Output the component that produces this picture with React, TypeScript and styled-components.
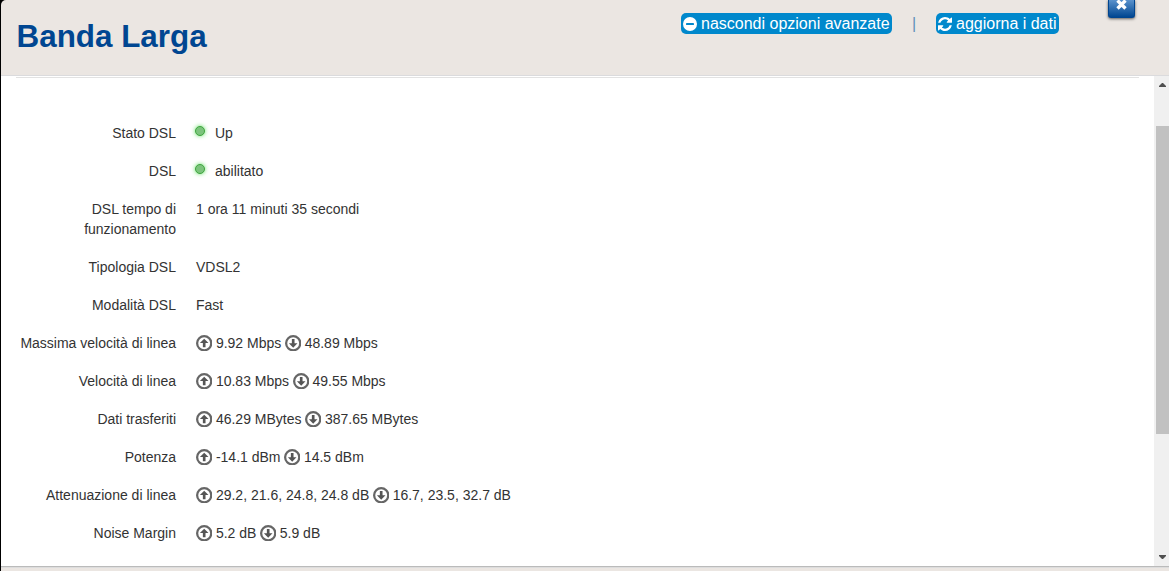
import type { ReactNode } from "react";
import styled, { createGlobalStyle } from "styled-components";

const GlobalStyle = createGlobalStyle`
    * {
        box-sizing: border-box;
    }
    body {
        margin: 0;
        background-color: #000;
        font-family: "Liberation Sans", Arial, sans-serif;
        font-size: 14px;
        line-height: 20px;
        color: #333;
        overflow: hidden;
    }
`;

const Modal = styled.div`
    height: 571px;
    margin-left: 1px;
    display: flex;
    flex-direction: column;
    background-color: #ebe6e2;
    border-top-left-radius: 5px;
`;

const Header = styled.header`
    height: 76px;
    flex: none;
    display: flex;
    justify-content: space-between;
    align-items: flex-start;
    padding: 0 34px 0 15.5px;
    border-bottom: 1px solid #dbdbdd;
`;

const Title = styled.h2`
    margin: 17px 0 0;
    font-size: 31.4px;
    line-height: 40px;
    font-weight: 700;
    color: #004691;
`;

const Actions = styled.div`
    display: flex;
    align-items: flex-start;
`;

const ActionButton = styled.button<{ $width: number }>`
    width: ${props => props.$width}px;
    height: 21px;
    margin-top: 13px;
    padding: 0 0 0 2px;
    display: flex;
    align-items: center;
    gap: 4px;
    border: none;
    border-radius: 5px;
    background-color: #0088cc;
    color: white;
    font-family: inherit;
    font-size: 16px;
    line-height: 21px;
    white-space: nowrap;
    cursor: pointer;
    svg {
        flex: none;
    }
`;

const Separator = styled.span`
    width: 44px;
    margin-top: 14px;
    text-align: center;
    font-size: 16px;
    color: #5f90b8;
`;

const CloseButton = styled.button`
    width: 27px;
    height: 18px;
    margin-left: 49px;
    padding: 0;
    display: flex;
    justify-content: center;
    border: 1px solid #00458f;
    border-top: none;
    border-radius: 0 0 3px 3px;
    background-image: linear-gradient(#5a92cc, #004691);
    box-shadow: 0 1px 3px rgba(0, 0, 0, 0.6);
    cursor: pointer;
`;

const Body = styled.main`
    height: 490px;
    flex: none;
    display: flex;
    background-color: white;
`;

const Content = styled.div`
    flex: 1;
    padding: 1px 15px 0;
`;

const Divider = styled.div`
    height: 1px;
    margin-bottom: 45px;
    background-color: #e2e2e2;
`;

const Row = styled.div`
    display: flex;
    gap: 20px;
    margin-bottom: 18px;
`;

const Label = styled.div`
    width: 160px;
    text-align: right;
`;

const Value = styled.div`
    display: flex;
    align-items: center;
    height: 20px;
    white-space: nowrap;
`;

const Led = styled.span`
    width: 10px;
    height: 10px;
    margin: 0 10px 4px -1px;
    border: 1px solid #3fa53f;
    border-radius: 50%;
    background-color: #7cc47c;
    box-shadow: 0 0 4px #5fe05f;
`;

const Rate = styled.span`
    display: flex;
    align-items: center;
    gap: 3.5px;
    margin-right: 3.5px;
`;

const Scrollbar = styled.div`
    width: 15px;
    display: flex;
    flex-direction: column;
    align-items: flex-end;
    background-color: #f0f0f0;
`;

const ScrollArrow = styled.div<{ $height: number; $align: string }>`
    width: 13px;
    height: ${props => props.$height}px;
    display: flex;
    justify-content: center;
    align-items: ${props => props.$align};
    padding: 7px 0;
`;

const Thumb = styled.div`
    width: 13px;
    height: 308px;
    background-color: #c1c1c1;
`;

const Footer = styled.footer`
    flex: 1;
    border-top: 1px solid #bbb;
    box-shadow: inset 0 1px 0 #ddd;
`;

function MinusIcon() {
    return (
        <svg width="14" height="14" viewBox="0 0 14 14">
            <circle cx="7" cy="7" r="7" fill="white" />
            <rect x="3" y="6" width="8" height="2" rx="0.4" fill="#0088cc" />
        </svg>
    );
}

function RefreshIcon() {
    return (
        <svg width="14" height="14" viewBox="0 0 1536 1536" fill="white">
            <path d="M1511 928q0 5-1 7-64 268-268 434.5T764 1536q-146 0-282.5-55T238 1324l-129 129q-19 19-45 19t-45-19-19-45V960q0-26 19-45t45-19h448q26 0 45 19t19 45-19 45l-137 137q71 66 161 102t187 36q134 0 250-65t186-179q11-17 53-117 8-23 30-23h192q13 0 22.500 9.500t9.500 22.500zm25-800v448q0 26-19 45t-45 19h-448q-26 0-45-19t-19-45 19-45l138-138Q969 256 768 256q-134 0-250 65T332 500q-11 17-53 117-8 23-30 23H50q-13 0-22.500-9.500T18 608v-7q65-268 270-434.500T768 0q146 0 284 55.500T1297 212l130-129q19-19 45-19t45 19 19 45z" />
        </svg>
    );
}

function CloseIcon() {
    return (
        <svg width="12" height="10" viewBox="0 0 12 10">
            <path d="M1.500 0.500l8 8M9.500 0.500l-8 8" stroke="white" strokeWidth="3.4" />
        </svg>
    );
}

function ArrowIcon({ down = false }: { down?: boolean }) {
    return (
        <svg width="16.400" height="16.400" viewBox="0 0 16 16">
            <circle cx="8" cy="8" r="6.900" fill="none" stroke="#666" strokeWidth="2.200" />
            <path
                d="M8 3.600L12.200 7.900H9.300V12H6.700V7.900H3.800z"
                fill="#555"
                transform={down ? "rotate(180 8 8)" : undefined}
            />
        </svg>
    );
}

interface FieldProps {
    label: string;
    children: ReactNode;
}

function Field({ label, children }: FieldProps) {
    return (
        <Row>
            <Label>{label}</Label>
            <Value>{children}</Value>
        </Row>
    );
}

const rates = [
    { label: "Massima velocità di linea", up: "9.92 Mbps", down: "48.89 Mbps" },
    { label: "Velocità di linea", up: "10.83 Mbps", down: "49.55 Mbps" },
    { label: "Dati trasferiti", up: "46.29 MBytes", down: "387.65 MBytes" },
    { label: "Potenza", up: "-14.1 dBm", down: "14.5 dBm" },
    { label: "Attenuazione di linea", up: "29.2, 21.6, 24.8, 24.8 dB", down: "16.7, 23.5, 32.7 dB" },
    { label: "Noise Margin", up: "5.2 dB", down: "5.9 dB" },
];

export default function App() {
    return (
        <>
            <GlobalStyle />
            <Modal>
                <Header>
                    <Title>Banda Larga</Title>
                    <Actions>
                        <ActionButton $width={211}>
                            <MinusIcon />
                            nascondi opzioni avanzate
                        </ActionButton>
                        <Separator>|</Separator>
                        <ActionButton $width={123}>
                            <RefreshIcon />
                            aggiorna i dati
                        </ActionButton>
                        <CloseButton aria-label="Chiudi">
                            <CloseIcon />
                        </CloseButton>
                    </Actions>
                </Header>
                <Body>
                    <Content>
                        <Divider />
                        <Field label="Stato DSL"><Led />Up</Field>
                        <Field label="DSL"><Led />abilitato</Field>
                        <Field label="DSL tempo di funzionamento">1 ora 11 minuti 35 secondi</Field>
                        <Field label="Tipologia DSL">VDSL2</Field>
                        <Field label="Modalità DSL">Fast</Field>
                        {rates.map(rate => (
                            <Field key={rate.label} label={rate.label}>
                                <Rate><ArrowIcon />{rate.up}</Rate>
                                <Rate><ArrowIcon down />{rate.down}</Rate>
                            </Field>
                        ))}
                    </Content>
                    <Scrollbar>
                        <ScrollArrow $height={50} $align="flex-start">
                            <svg width="7" height="4" viewBox="0 0 7 4"><path d="M0 4V3L3 0H4L7 3V4z" fill="#505050" /></svg>
                        </ScrollArrow>
                        <Thumb />
                        <ScrollArrow $height={132} $align="flex-end">
                            <svg width="7" height="4" viewBox="0 0 7 4"><path d="M0 0V1L3 4H4L7 1V0z" fill="#505050" /></svg>
                        </ScrollArrow>
                    </Scrollbar>
                </Body>
                <Footer />
            </Modal>
        </>
    );
}
